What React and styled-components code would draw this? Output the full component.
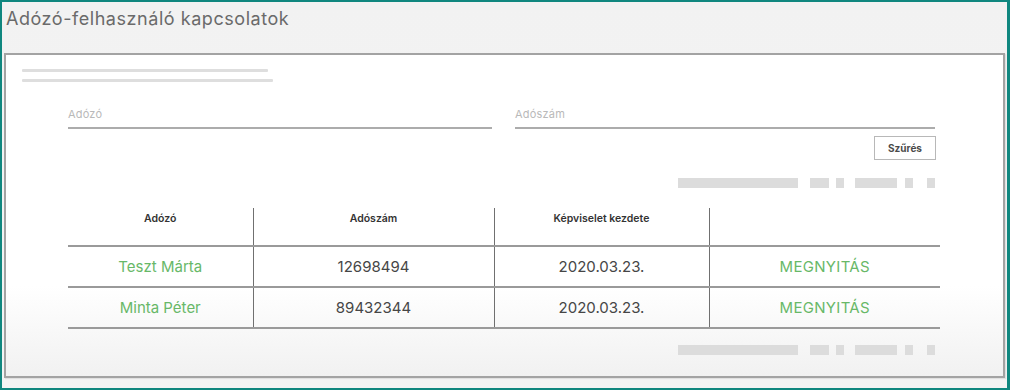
import React from "react";
import styled, { createGlobalStyle } from "styled-components";

const Global = createGlobalStyle`
  html, body { margin: 0; padding: 0; background: #f1f1f1; }
  * { box-sizing: border-box; }
`;

const Frame = styled.div`
  width: 1010px;
  height: 390px;
  border: 2px solid #10877f;
  border-right-width: 3px;
  background: linear-gradient(180deg, #f2f2f2 0%, #f4f4f4 100%);
  font-family: Inter, "Noto Sans", sans-serif;
  padding: 0 0 0 2px;
  display: flex;
  flex-direction: column;
`;

const Title = styled.h1`
  margin: 0;
  height: 51px;
  padding: 6px 0 0 2px;
  font-size: 18px;
  font-weight: 400;
  color: #6a6a6a;
  letter-spacing: 0.55px;
`;

const Card = styled.section`
  width: 1001px;
  height: 325px;
  border: 2px solid #a3a3a3;
  box-shadow: 1px 1px 1px rgba(0, 0, 0, 0.08);
  background: linear-gradient(180deg, #ffffff 0%, #ffffff 72%, #f1f1f1 100%);
  padding: 14px 16px 0 16px;
  display: flex;
  flex-direction: column;
`;

const Skeleton = styled.div`
  display: flex;
  flex-direction: column;
  gap: 7px;
`;

const SkelLine = styled.div`
  height: 3px;
  width: ${(p) => p.$w}px;
  background: #dedede;
  border-radius: 1px;
`;

const Body = styled.div`
  margin: 0 0 0 46px;
  width: 872px;
  display: flex;
  flex-direction: column;
`;

const FilterRow = styled.div`
  display: grid;
  grid-template-columns: 424px 420px;
  column-gap: 23px;
  margin-top: 23px;
`;

const Field = styled.div`
  display: flex;
  flex-direction: column;
  height: 24px;
  justify-content: flex-start;
  border-bottom: 2px solid #acacac;
  padding-top: 2px;
`;

const Placeholder = styled.span`
  font-size: 11px;
  color: #b9b9b9;
  letter-spacing: 0.2px;
`;

const ButtonRow = styled.div`
  display: flex;
  justify-content: flex-end;
  padding-right: 4px;
  margin-top: 7px;
`;

const FilterButton = styled.button`
  width: 62px;
  height: 24px;
  border: 1.5px solid #b8b8b8;
  background: #fff;
  font-family: Inter, "Noto Sans", sans-serif;
  font-size: 10px;
  font-weight: 700;
  color: #4a4a4a;
  padding: 0;
`;

const Pager = styled.div`
  display: flex;
  justify-content: flex-end;
  align-items: center;
  padding-right: 5px;
  margin-top: ${(p) => p.$mt}px;
  height: 10px;
`;

const PagerBlock = styled.div`
  height: 10px;
  width: ${(p) => p.$w}px;
  margin-left: ${(p) => p.$ml}px;
  background: #dcdcdc;
`;

const Table = styled.table`
  width: 872px;
  border-collapse: collapse;
  margin-top: 20px;
  table-layout: fixed;
`;

const Th = styled.th`
  height: 38px;
  width: ${(p) => p.$w}px;
  vertical-align: top;
  padding: 4px 0 0 0;
  font-size: 10.5px;
  font-weight: 600;
  color: #333;
  border-bottom: 2px solid #9a9a9a;
  border-left: ${(p) => (p.$first ? "none" : "1.5px solid #707070")};
`;

const Td = styled.td`
  height: 41px;
  text-align: center;
  vertical-align: middle;
  font-size: 15px;
  color: ${(p) => (p.$green ? "#68b868" : "#464646")};
  border-bottom: 2px solid #9a9a9a;
  border-left: ${(p) => (p.$first ? "none" : "1.5px solid #707070")};
  letter-spacing: ${(p) => (p.$caps ? "0.3px" : "0")};
`;

const rows = [
  { name: "Teszt Márta", num: "12698494", date: "2020.03.23." },
  { name: "Minta Péter", num: "89432344", date: "2020.03.23." },
];

const PagerBar = ({ mt }) => (
  <Pager $mt={mt}>
    <PagerBlock $w={120} $ml={0} />
    <PagerBlock $w={19} $ml={12} />
    <PagerBlock $w={8} $ml={7} />
    <PagerBlock $w={42} $ml={11} />
    <PagerBlock $w={8} $ml={8} />
    <PagerBlock $w={8} $ml={14} />
  </Pager>
);

export default function App() {
  return (
    <>
      <Global />
      <Frame>
        <Title>Adózó-felhasználó kapcsolatok</Title>
        <Card>
          <Skeleton>
            <SkelLine $w={246} />
            <SkelLine $w={251} />
          </Skeleton>
          <Body>
            <FilterRow>
              <Field>
                <Placeholder>Adózó</Placeholder>
              </Field>
              <Field>
                <Placeholder>Adószám</Placeholder>
              </Field>
            </FilterRow>
            <ButtonRow>
              <FilterButton>Szűrés</FilterButton>
            </ButtonRow>
            <PagerBar mt={18} />
            <Table>
              <thead>
                <tr>
                  <Th $w={185} $first>Adózó</Th>
                  <Th $w={241}>Adószám</Th>
                  <Th $w={215}>Képviselet kezdete</Th>
                  <Th $w={231}></Th>
                </tr>
              </thead>
              <tbody>
                {rows.map((r) => (
                  <tr key={r.name}>
                    <Td $first $green>{r.name}</Td>
                    <Td>{r.num}</Td>
                    <Td>{r.date}</Td>
                    <Td $green $caps>MEGNYITÁS</Td>
                  </tr>
                ))}
              </tbody>
            </Table>
            <PagerBar mt={16} />
          </Body>
        </Card>
      </Frame>
    </>
  );
}
